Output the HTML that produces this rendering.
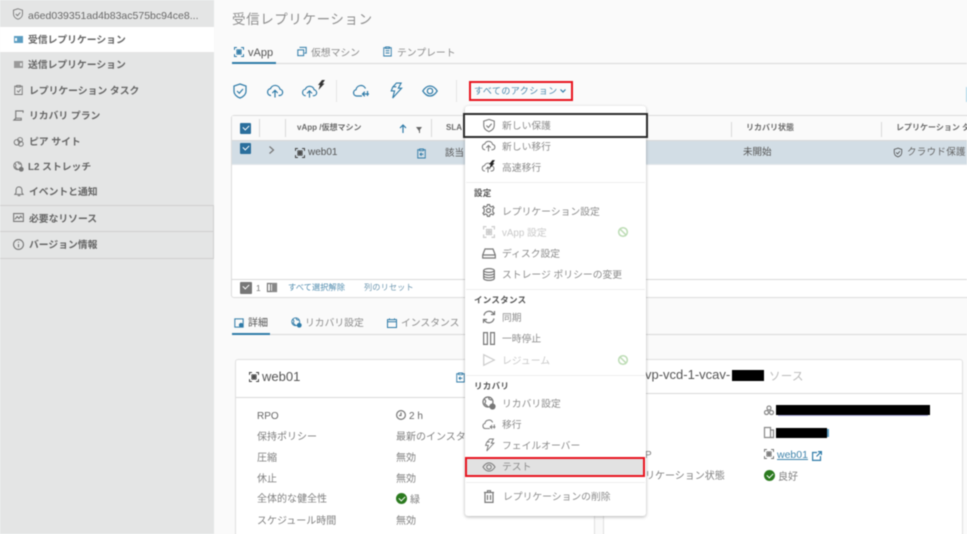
<!DOCTYPE html>
<html lang="ja"><head><meta charset="utf-8"><style>
html,body{margin:0;padding:0;width:967px;height:534px;overflow:hidden;background:#fafafa}
body{position:relative;font-family:"Liberation Sans","Noto Sans CJK JP",sans-serif;color:#6f6f6f;font-size:10px}
#w{position:absolute;inset:0;filter:blur(.5px)}
.a,.t,svg.i{position:absolute}
.t{white-space:nowrap;line-height:14px;margin-top:-7px}
.side{position:absolute;left:0;top:0;width:214px;height:534px;background:#e4e5e5}
.t.s{font-size:9.800px;color:#666;font-weight:700;margin-top:-5.500px}
.b{position:absolute;height:1px;background:#d9d9d9}
svg.i{fill:none;stroke:#777;color:#777;stroke-width:1.2;overflow:visible}
svg.i.blue{stroke:#2f7ba8;color:#2f7ba8}
.t.m{color:#8c8c8c;font-size:9.800px;margin-top:-5.500px}
.h{font-weight:700;color:#555;font-size:8.500px;letter-spacing:.3px}
.th{font-weight:700;color:#6a6a6a;font-size:8px}
.t.d{color:#808080;font-size:10px;margin-top:-5.500px}
.k{position:absolute;background:#000}
.cb{position:absolute;width:11px;height:11px;background:#2a6e9c;border-radius:1px}
.cb:after{content:"";position:absolute;left:3px;top:2px;width:5px;height:3px;border:solid #fff;border-width:0 0 1.500px 1.500px;transform:rotate(-45deg)}
</style></head><body><div id="w">
<svg width="0" height="0" style="position:absolute"><defs>
<symbol id="shield" viewBox="0 0 16 16"><path d="M8 1L14 3V8C14 11.500 11 14 8 15C5 14 2 11.500 2 8V3Z M5 8L7.300 10.300L11 6"/></symbol>
<symbol id="up" viewBox="0 0 18 16"><path d="M5 12.500H4.500A3.500 3.500 0 0 1 4.500 5.600A5 5 0 0 1 14 6.200A3.200 3.200 0 0 1 14 12.500H12.500M9 14.500V7.500M6.300 10L9 7.300L11.700 10"/></symbol>
<symbol id="back" viewBox="0 0 18 16"><path d="M10 13H4.500A3.200 3.200 0 0 1 4 6.700A5 5 0 0 1 13.500 5.500M17 11H10.500M12.800 8.700L10.500 11L12.800 13.300M15.500 8V13"/></symbol>
<symbol id="bolt" viewBox="0 0 16 18"><path d="M9 1H14L11 6.500H14.500L5 17L7 9.500H3.500L5 5.500ZM6 5H9"/></symbol>
<symbol id="eye" viewBox="0 0 16 12"><path d="M.8 6C3 2.500 5.500 1 8 1S13 2.500 15.200 6C13 9.500 10.500 11 8 11S3 9.500 .8 6Z"/><circle cx="8" cy="6" r="2.700"/></symbol>
<symbol id="vapp" viewBox="0 0 12 12"><path d="M.6 3.500V.6H3.500M8.500.6H11.400V3.500M11.400 8.500V11.400H8.500M3.500 11.400H.6V8.500M3.500 3.500H5.500V5.500H3.500ZM6.500 3.500H8.500V5.500H6.500ZM3.500 6.500H5.500V8.500H3.500ZM6.500 6.500H8.500V8.500H6.500Z"/></symbol>
<symbol id="clip" viewBox="0 0 12 14"><path d="M3.500 2H1V13H11V2H8.500M3.500 1H8.500V3.300H3.500ZM8.500 8H4M6 6L4 8L6 10"/></symbol>
<symbol id="globe" viewBox="0 0 14 14"><circle cx="6" cy="6" r="5"/><path d="M2 3C4 4 4 6 3 7S5 9 6 11M7 1.500C6 3 8 4 10 4"/><circle cx="10.500" cy="10.500" r="2.500" fill="currentColor"/></symbol>
</defs></svg>

<div class="side"></div>
<div class="a" style="left:0;top:27px;width:214px;height:25px;background:#fff"></div>
<div class="b" style="left:0;top:205px;width:214px;background:#cfcfcf"></div>
<div class="b" style="left:0;top:231px;width:214px;background:#cfcfcf"></div>
<div class="b" style="left:0;top:258px;width:214px;background:#cfcfcf"></div>
<div class="a" style="left:0;top:205px;width:214px;height:53px;border-right:1px solid #d0d0d0;box-sizing:border-box"></div>

<svg class="i" style="left:12px;top:8px" width="12" height="12"><use href="#shield"/></svg>
<div class="t s" style="left:28px;top:14px;font-weight:400;font-size:10.500px;color:#6a6a6a">a6ed039351ad4b83ac575bc94ce8...</div>
<div class="a" style="left:14px;top:36px;width:9px;height:7px;background:#5b9dc2"></div>
<div class="a" style="left:15px;top:38px;width:2px;height:3px;background:#fff"></div>
<div class="t s" style="left:28px;top:39px">受信レプリケーション</div>
<div class="a" style="left:14px;top:61px;width:9px;height:7px;background:#9a9a9a"></div>
<div class="a" style="left:20px;top:63px;width:2px;height:3px;background:#e4e5e5"></div>
<div class="t s" style="left:28px;top:64px">送信レプリケーション</div>
<svg class="i" style="left:14px;top:84px" width="9" height="12" viewBox="0 0 12 14"><path d="M3 2H1V13H11V2H9M3.500 1H8.500V3H3.500ZM4 8L6 10L9 6"/></svg>
<div class="t s" style="left:29px;top:90px">レプリケーション タスク</div>
<svg class="i" style="left:13px;top:110px" width="11" height="11" viewBox="0 0 12 12"><path d="M3 11H1L3 9V1H11V3M3 1V9H9V11H3"/></svg>
<div class="t s" style="left:29px;top:115px">リカバリ プラン</div>
<svg class="i" style="left:13px;top:136px" width="11" height="11" viewBox="0 0 14 14"><circle cx="5" cy="8" r="3.500"/><circle cx="9" cy="5" r="3"/><circle cx="10" cy="10" r="3"/></svg>
<div class="t s" style="left:29px;top:141px">ピア サイト</div>
<svg class="i" style="left:13px;top:161px" width="11" height="11" viewBox="0 0 14 14"><use href="#globe" width="14" height="14"/></svg>
<div class="t s" style="left:28px;top:166px">L2 ストレッチ</div>
<svg class="i" style="left:14px;top:186px" width="10" height="11" viewBox="0 0 12 13"><path d="M6 1C3.500 1 2.500 3 2.500 5V8L1 10H11L9.500 8V5C9.500 3 8.500 1 6 1ZM4.500 11.500H7.500"/></svg>
<div class="t s" style="left:29px;top:191px">イベントと通知</div>
<svg class="i" style="left:13px;top:213px" width="11" height="9" viewBox="0 0 12 10"><path d="M.6.600H11.400V9.400H.6ZM2 7L4.500 4L6.500 6L8.500 3.500L10 5.500"/></svg>
<div class="t s" style="left:29px;top:218px">必要なリソース</div>
<svg class="i" style="left:13px;top:239px" width="11" height="11" viewBox="0 0 12 12"><circle cx="6" cy="6" r="5.400"/><path d="M6 5.500V9M6 3V4"/></svg>
<div class="t s" style="left:29px;top:244px">バージョン情報</div>

<div class="t" style="left:232px;top:18px;font-size:13.500px;color:#8e8e8e;letter-spacing:.6px;line-height:16px;margin-top:-6px">受信レプリケーション</div>

<svg class="i blue" style="left:234px;top:47px" width="10" height="10"><use href="#vapp"/></svg>
<div class="t" style="left:248px;top:53px;font-size:11px;color:#555">vApp</div>
<svg class="i blue" style="left:297px;top:46px" width="10" height="11" viewBox="0 0 12 12"><path d="M3 1H11V8H9M1 4H8V11H1Z"/></svg>
<div class="t m" style="left:311px;top:52px">仮想マシン</div>
<svg class="i blue" style="left:383px;top:46px" width="9" height="11" viewBox="0 0 12 14"><path d="M3 2H1V13H11V2H9M3.500 1H8.500V3H3.500ZM3.500 6H8.500M3.500 9H8.500"/></svg>
<div class="t m" style="left:397px;top:52px">テンプレート</div>
<div class="b" style="left:232px;top:63px;width:735px"></div>
<div class="a" style="left:232px;top:61.500px;width:44px;height:2px;background:#2f7ba8"></div>

<svg class="i blue" style="left:232px;top:83px" width="16" height="16"><use href="#shield"/></svg>
<svg class="i blue" style="left:266px;top:83px" width="18" height="16"><use href="#up"/></svg>
<svg class="i blue" style="left:301px;top:84px" width="17" height="15"><use href="#up"/></svg>
<svg class="i" style="left:317px;top:80px;stroke:none;fill:#333" width="8" height="10" viewBox="0 0 8 10"><path d="M5 0H8L5.500 3.500H7.500L1.500 10L3 5H1Z"/></svg>
<svg class="i blue" style="left:352px;top:83px" width="18" height="16"><use href="#back"/></svg>
<svg class="i blue" style="left:388px;top:82px" width="15" height="17"><use href="#bolt"/></svg>
<svg class="i blue" style="left:422px;top:85px" width="16" height="12"><use href="#eye"/></svg>
<div class="b" style="left:336px;top:80px;width:1px;height:22px;background:#e6e6e6"></div>
<div class="b" style="left:456px;top:80px;width:1px;height:22px;background:#e6e6e6"></div>
<div class="t" style="left:474px;top:90.500px;font-size:9px;color:#4a87ab;letter-spacing:.45px">すべてのアクション</div>
<svg class="i blue" style="left:560px;top:89px" width="6" height="4" viewBox="0 0 6 4"><path d="M.5.500L3 3L5.500.500"/></svg>
<div class="a" style="left:469px;top:81px;width:104px;height:20px;border:2px solid #e8141f;box-sizing:border-box"></div>
<div class="a" style="left:966px;top:87px;width:1px;height:15px;background:#a8d4e8"></div>

<!-- table -->
<div class="a" style="left:231px;top:115px;width:740px;height:183px;background:#fff;border:1px solid #dcdcdc;border-radius:3px;box-sizing:border-box"></div>
<div class="a" style="left:232px;top:116px;width:735px;height:25px;background:#fafafa"></div>
<div class="a" style="left:232px;top:141px;width:735px;height:23px;background:#d2dde5"></div>
<div class="b" style="left:232px;top:140px;width:735px"></div>
<div class="b" style="left:232px;top:164px;width:735px;background:#e3e8ec"></div>
<div class="b" style="left:232px;top:279px;width:735px"></div>
<div class="cb" style="left:240px;top:123px"></div>
<div class="cb" style="left:240px;top:143px"></div>
<div class="b" style="left:259px;top:119px;width:1px;height:18px"></div>
<div class="b" style="left:285px;top:119px;width:1px;height:18px"></div>
<div class="b" style="left:431px;top:119px;width:1px;height:18px"></div>
<div class="b" style="left:731px;top:122px;width:1px;height:15px"></div>
<div class="b" style="left:881px;top:122px;width:1px;height:15px"></div>
<div class="t th" style="left:297px;top:128px">vApp /仮想マシン</div>
<svg class="i blue" style="left:399px;top:124px" width="8" height="9" viewBox="0 0 8 9"><path d="M4 9V1M1 4L4 1L7 4"/></svg>
<div class="a" style="left:416px;top:127px;width:0;height:0;border:3px solid transparent;border-top:4px solid #666;border-bottom:0"></div>
<div class="a" style="left:418.500px;top:130px;width:1px;height:3px;background:#666"></div>
<div class="t th" style="left:446px;top:128px">SLA</div>
<div class="t th" style="left:746px;top:128px">リカバリ状態</div>
<div class="t th" style="left:896px;top:128px">レプリケーション タ</div>
<svg class="i" style="left:269px;top:146px" width="5" height="8" viewBox="0 0 5 8"><path d="M.5.500L4.500 4L.5 7.500"/></svg>
<svg class="i" style="left:295px;top:148px;stroke:#444" width="10" height="10"><use href="#vapp"/></svg>
<div class="t" style="left:308px;top:153px;font-size:10px;color:#555">web01</div>
<svg class="i blue" style="left:417px;top:148px" width="9" height="11"><use href="#clip"/></svg>
<div class="t" style="left:445px;top:154px;font-size:9.500px;color:#555">該当</div>
<div class="t" style="left:743px;top:153px;font-size:9.500px;color:#555">未開始</div>
<svg class="i" style="left:893px;top:147px;stroke:#444" width="10" height="11"><use href="#shield"/></svg>
<div class="t" style="left:907px;top:153px;font-size:9.500px;color:#666;letter-spacing:.3px">クラウド保護</div>

<div class="a" style="left:240px;top:282px;width:12px;height:12px;background:#777;border-radius:1px"></div>
<div class="a" style="left:243px;top:284px;width:5px;height:3px;border:solid #fff;border-width:0 0 1.500px 1.500px;transform:rotate(-45deg)"></div>
<div class="t" style="left:256px;top:288px;font-size:8.500px;color:#777">1</div>
<svg class="i" style="left:267px;top:283px" width="10" height="9" viewBox="0 0 10 9"><path d="M.5.500H9.500V8.500H.5ZM3.500.500V8.500M6.500.500V8.500"/></svg>
<div class="a" style="left:272px;top:283px;width:5px;height:9px;background:#888"></div>
<div class="t" style="left:288px;top:288px;font-size:8.200px;color:#4f8bae;letter-spacing:.1px">すべて選択解除</div>
<div class="t" style="left:364px;top:288px;font-size:8.200px;color:#6d97b0;letter-spacing:.1px">列のリセット</div>

<!-- lower tabs -->
<svg class="i blue" style="left:234px;top:318px" width="10" height="10" viewBox="0 0 12 12"><path d="M11 1H1V11H11ZM6 8H9"/><circle cx="8.500" cy="8.500" r="2" fill="#2f7ba8"/></svg>
<div class="t" style="left:248px;top:324px;font-size:10px;color:#555">詳細</div>
<svg class="i blue" style="left:291px;top:317px" width="11" height="11"><use href="#globe" width="11" height="11"/></svg>
<div class="t m" style="left:305px;top:322px">リカバリ設定</div>
<svg class="i blue" style="left:387px;top:318px" width="10" height="10" viewBox="0 0 12 12"><path d="M.6 2H11.400V11.400H.6ZM.6 4.500H11.400M3 .5V2M9 .5V2"/></svg>
<div class="t m" style="left:401px;top:322px">インスタンス</div>
<div class="b" style="left:232px;top:334px;width:735px"></div>
<div class="a" style="left:232px;top:332.500px;width:38px;height:2px;background:#2f7ba8"></div>

<!-- cards -->
<div class="a" style="left:235px;top:359px;width:360px;height:190px;background:#fff;border:1px solid #e0e0e0;border-radius:3px;box-sizing:border-box"></div>
<div class="b" style="left:236px;top:397px;width:358px"></div>
<svg class="i" style="left:249px;top:372px;stroke:#444" width="10" height="10"><use href="#vapp"/></svg>
<div class="t" style="left:262px;top:377px;font-size:13px;color:#555">web01</div>
<svg class="i blue" style="left:456px;top:372px" width="9" height="11"><use href="#clip"/></svg>
<div class="t d" style="left:257px;top:415px;color:#666">RPO</div>
<div class="t d" style="left:257px;top:436px">保持ポリシー</div>
<div class="t d" style="left:257px;top:457px">圧縮</div>
<div class="t d" style="left:257px;top:478px">休止</div>
<div class="t d" style="left:257px;top:498px">全体的な健全性</div>
<div class="t d" style="left:257px;top:520px">スケジュール時間</div>
<svg class="i" style="left:396px;top:410px" width="10" height="10" viewBox="0 0 10 10"><circle cx="5" cy="5" r="4.400"/><path d="M5 2.500V5.500H3"/></svg>
<div class="t d" style="left:409px;top:415px;color:#666">2 h</div>
<div class="t d" style="left:396px;top:436px">最新のインスタ</div>
<div class="t d" style="left:396px;top:457px">無効</div>
<div class="t d" style="left:396px;top:478px">無効</div>
<div class="a" style="left:396px;top:493px;width:11px;height:11px;border-radius:50%;background:#2b7a1f"></div>
<div class="a" style="left:398.500px;top:495.500px;width:5px;height:3px;border:solid #fff;border-width:0 0 1.500px 1.500px;transform:rotate(-45deg)"></div>
<div class="t d" style="left:410px;top:499px">緑</div>
<div class="t d" style="left:396px;top:520px">無効</div>

<div class="a" style="left:603px;top:359px;width:360px;height:190px;background:#fff;border:1px solid #e0e0e0;border-radius:3px;box-sizing:border-box"></div>
<div class="b" style="left:604px;top:393px;width:358px"></div>
<div class="t" style="left:645px;top:375px;font-size:13px;color:#555">vp-vcd-1-vcav-</div>
<div class="k" style="left:732px;top:370px;width:32px;height:11px"></div>
<div class="t" style="left:769px;top:377px;font-size:11.500px;color:#bbb;letter-spacing:.3px">ソース</div>
<svg class="i" style="left:764px;top:405px;stroke:#888" width="10" height="11" viewBox="0 0 10 11"><circle cx="5" cy="3" r="2"/><circle cx="2.500" cy="7.500" r="2"/><circle cx="7.500" cy="7.500" r="2"/></svg>
<div class="k" style="left:776px;top:405px;width:154px;height:10px"></div>
<div class="a" style="left:778px;top:415px;width:150px;height:1px;background:#a9a9dd"></div>
<svg class="i" style="left:764px;top:427px;stroke:#888" width="10" height="11" viewBox="0 0 10 11"><path d="M.5.500H6.500V10.500H.5ZM6.500 3H9.500V10.500H6.500"/></svg>
<div class="k" style="left:776px;top:428px;width:51px;height:10px"></div>
<div class="a" style="left:827px;top:429px;width:2px;height:8px;background:#5b9dc2"></div>
<svg class="i" style="left:764px;top:449px" width="10" height="10"><use href="#vapp"/></svg>
<div class="t" style="left:777px;top:455px;font-size:10.500px;color:#3f84ab;text-decoration:underline">web01</div>
<svg class="i blue" style="left:812px;top:451px" width="10" height="10" viewBox="0 0 10 10"><path d="M5 1.500H.6V9.400H8.500V5M6 .6H9.400V4M9.400.6L4.500 5.500"/></svg>
<div class="a" style="left:764px;top:470px;width:11px;height:11px;border-radius:50%;background:#2b7a1f"></div>
<div class="a" style="left:766.500px;top:472.500px;width:5px;height:3px;border:solid #fff;border-width:0 0 1.500px 1.500px;transform:rotate(-45deg)"></div>
<div class="t d" style="left:778px;top:476px">良好</div>
<div class="t d" style="left:645px;top:454px">P</div>
<div class="t d" style="left:645px;top:475px">リケーション状態</div>

<!-- menu -->
<div class="a" style="left:465px;top:106px;width:181px;height:410px;background:#fff;border-radius:3px;box-shadow:0 1px 3px rgba(0,0,0,.3)"></div>
<div class="b" style="left:466px;top:182px;width:179px;background:#eee"></div>
<div class="b" style="left:466px;top:289px;width:179px;background:#eee"></div>
<div class="b" style="left:466px;top:375px;width:179px;background:#eee"></div>
<div class="b" style="left:466px;top:482px;width:179px;background:#eee"></div>
<div class="a" style="left:467px;top:458px;width:176px;height:17px;background:#e2e2e2"></div>

<svg class="i" style="left:482px;top:118px" width="14" height="15"><use href="#shield"/></svg>
<div class="t m" style="left:502px;top:125px">新しい保護</div>
<svg class="i" style="left:481px;top:139px" width="15" height="14"><use href="#up"/></svg>
<div class="t m" style="left:502px;top:146px">新しい移行</div>
<svg class="i" style="left:481px;top:161px" width="14" height="13"><use href="#up"/></svg>
<svg class="i" style="left:488px;top:159px;stroke:none;fill:#222" width="7" height="11" viewBox="0 0 8 10"><path d="M5 0H8L5.500 3.500H7.500L1.500 10L3 5H1Z"/></svg>
<div class="t m" style="left:502px;top:167px">高速移行</div>

<div class="t h" style="left:474px;top:193px">設定</div>
<svg class="i" style="left:482px;top:204px" width="13" height="13" viewBox="0 0 13 13"><circle cx="6.500" cy="6.500" r="2"/><path d="M5.500.6H7.500L8 2.300L9.500 3L11 2.200L12 3.800L10.800 5V8L12 9.200L11 10.800L9.500 10L8 10.700L7.500 12.400H5.500L5 10.700L3.500 10L2 10.800L1 9.200L2.200 8V5L1 3.800L2 2.200L3.500 3L5 2.300Z"/></svg>
<div class="t m" style="left:502px;top:211px">レプリケーション設定</div>
<svg class="i" style="left:483px;top:226px;stroke:#ccc" width="12" height="12"><use href="#vapp"/></svg>
<div class="t m" style="left:502px;top:232px;color:#c9c9c9">vApp 設定</div>
<svg class="i" style="left:618px;top:227px;stroke:#bcdcb4;stroke-width:1.500" width="10" height="10" viewBox="0 0 10 10"><circle cx="5" cy="5" r="4.300"/><path d="M2 2L8 8"/></svg>
<svg class="i" style="left:482px;top:248px" width="14" height="11" viewBox="0 0 14 11"><path d="M.7 7V10H13.300V7L11 1H3ZM.7 7H13.300"/></svg>
<div class="t m" style="left:502px;top:253px">ディスク設定</div>
<svg class="i" style="left:483px;top:268px" width="12" height="13" viewBox="0 0 12 13"><ellipse cx="6" cy="2.500" rx="5.300" ry="1.900"/><path d="M.7 2.500V10.500C.7 11.500 3 12.400 6 12.400S11.300 11.500 11.300 10.500V2.500M.7 5.200C.7 6.200 3 7.100 6 7.100S11.300 6.200 11.300 5.200M.7 7.900C.7 8.900 3 9.800 6 9.800S11.300 8.900 11.300 7.900"/></svg>
<div class="t m" style="left:502px;top:274px">ストレージ ポリシーの変更</div>

<div class="t h" style="left:474px;top:300px">インスタンス</div>
<svg class="i" style="left:482px;top:310px" width="14" height="14" viewBox="0 0 14 14"><path d="M2 5.500A5.200 5.200 0 0 1 11 3L12.500 4.500M12.500 1V4.500H9M12 8.500A5.200 5.200 0 0 1 3 11L1.500 9.500M1.500 13V9.500H5"/></svg>
<div class="t m" style="left:502px;top:317px">同期</div>
<svg class="i" style="left:483px;top:332px" width="12" height="13" viewBox="0 0 12 13"><path d="M.6.600H4.400V12.400H.6ZM7.600.600H11.400V12.400H7.600Z"/></svg>
<div class="t m" style="left:502px;top:338px">一時停止</div>
<svg class="i" style="left:483px;top:354px;stroke:#ccc" width="12" height="12" viewBox="0 0 12 12"><path d="M.7.700L11.300 6L.7 11.300Z"/></svg>
<div class="t m" style="left:502px;top:360px;color:#c9c9c9">レジューム</div>
<svg class="i" style="left:618px;top:355px;stroke:#bcdcb4;stroke-width:1.500" width="10" height="10" viewBox="0 0 10 10"><circle cx="5" cy="5" r="4.300"/><path d="M2 2L8 8"/></svg>

<div class="t h" style="left:474px;top:386px">リカバリ</div>
<svg class="i" style="left:482px;top:396px" width="14" height="14"><use href="#globe" width="14" height="14"/></svg>
<div class="t m" style="left:502px;top:403px">リカバリ設定</div>
<svg class="i" style="left:481px;top:418px" width="16" height="13"><use href="#back"/></svg>
<div class="t m" style="left:502px;top:424px">移行</div>
<svg class="i" style="left:483px;top:438px" width="12" height="14"><use href="#bolt"/></svg>
<div class="t m" style="left:502px;top:445px">フェイルオーバー</div>
<svg class="i" style="left:482px;top:462px" width="14" height="10"><use href="#eye"/></svg>
<div class="t m" style="left:502px;top:466px">テスト</div>
<svg class="i" style="left:484px;top:490px" width="10" height="13" viewBox="0 0 10 13"><path d="M1 3V12.400H9V3M0 2.500H10M3.500 2.500V.7H6.500V2.500M3.500 5V10M6.500 5V10"/></svg>
<div class="t m" style="left:503px;top:496px">レプリケーションの削除</div>

<div class="a" style="left:463px;top:113px;width:185px;height:25px;border:2px solid #2b2b2b;box-sizing:border-box"></div>
<div class="a" style="left:465px;top:457px;width:180px;height:20px;border:2px solid #e8141f;box-sizing:border-box"></div>
</div></body></html>
